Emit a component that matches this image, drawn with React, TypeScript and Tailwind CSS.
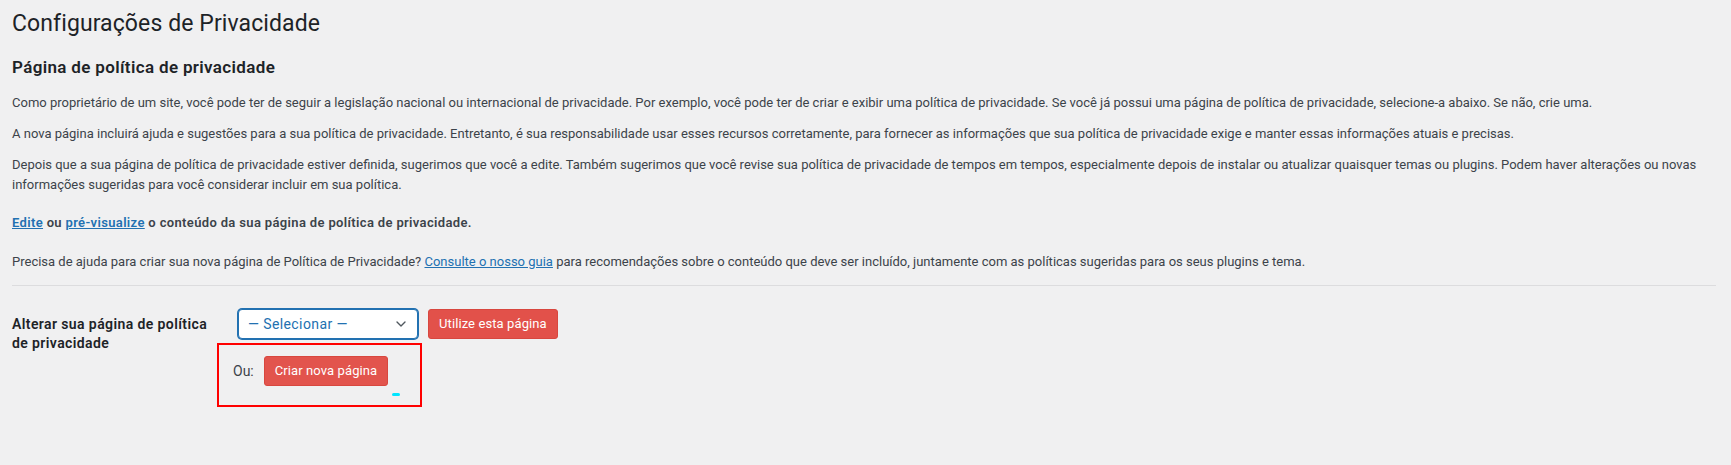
import React from "react";

const PrivacySettings = () => {
  return (
    <div className="min-h-[465px] bg-[#f0f0f1] pl-3 pr-[15px] pt-[9px] font-['Roboto',sans-serif] text-[13px] leading-[20px] text-[#3c434a]">
      <h1 className="text-[23px] leading-[30px] font-normal tracking-[0.1px] text-[#1d2327]">
        Configurações de Privacidade
      </h1>

      {/* Página de política */}
      <h2 className="mt-[17px] text-[17px] leading-[22px] font-semibold tracking-[0.35px] text-[#1d2327]">
        Página de política de privacidade
      </h2>

      <p className="mt-[15px]">
        Como proprietário de um site, você pode ter de seguir a legislação nacional ou internacional de privacidade. Por exemplo, você pode ter de criar e exibir uma política de privacidade. Se você já possui uma página de política de privacidade, selecione-a abaixo. Se não, crie uma.
      </p>
      <p className="mt-[11px]">
        A nova página incluirá ajuda e sugestões para a sua política de privacidade. Entretanto, é sua responsabilidade usar esses recursos corretamente, para fornecer as informações que sua política de privacidade exige e manter essas informações atuais e precisas.
      </p>
      <p className="mt-[11px]">
        <span className="whitespace-nowrap">
          Depois que a sua página de política de privacidade estiver definida, sugerimos que você a edite. Também sugerimos que você revise sua política de privacidade de tempos em tempos, especialmente depois de instalar ou atualizar quaisquer temas ou plugins. Podem haver alterações ou novas
        </span>
        <br />
        informações sugeridas para você considerar incluir em sua política.
      </p>

      <p className="mt-[18px] font-semibold tracking-[0.35px]">
        <a href="#" className="text-[#2271b1] underline">
          Edite
        </a>{" "}
        ou{" "}
        <a href="#" className="text-[#2271b1] underline">
          pré-visualize
        </a>{" "}
        o conteúdo da sua página de política de privacidade.
      </p>

      <p className="mt-[19px]">
        Precisa de ajuda para criar sua nova página de Política de Privacidade?{" "}
        <a href="#" className="text-[#2271b1] underline">
          Consulte o nosso guia
        </a>{" "}
        para recomendações sobre o conteúdo que deve ser incluído, juntamente com as políticas sugeridas para os seus plugins e tema.
      </p>

      <div className="mt-[13px] border-t border-[#dcdcde]" />

      {/* Alterar página */}
      <div className="flex">
        <div className="w-[226px] pr-[24px] pt-[29px] text-[14px] leading-[19px] font-semibold tracking-[0.4px] text-[#1d2327]">
          Alterar sua página de política de privacidade
        </div>
        <div className="pt-[23px]">
          <div className="flex gap-[10px]">
            <div className="relative flex h-[30px] w-[180px] items-center rounded-[4px] border border-[#2271b1] bg-white pl-[9px] text-[14px] tracking-[0.4px] text-[#2271b1] shadow-[0_0_0_1px_#2271b1]">
              — Selecionar —
              <svg
                className="absolute right-[8px] top-1/2 h-[16px] w-[16px] -translate-y-1/2 text-[#50575e]"
                fill="none"
                stroke="currentColor"
                viewBox="0 0 24 24"
              >
                <path strokeLinecap="round" strokeLinejoin="round" strokeWidth={2} d="M6 9l6 6 6-6" />
              </svg>
            </div>
            <button className="h-[30px] rounded-[3px] border border-[#d8473f] bg-[#e2514a] px-[10px] text-[13px] tracking-[0.1px] text-white">
              Utilize esta página
            </button>
          </div>

          <div className="relative ml-[-21px] mt-[4px] flex h-[64px] w-[205px] items-start gap-[10px] border-2 border-[#ff0000] pl-[14px] pt-[11px]">
            <span className="text-[14px] leading-[30px] text-[#3c434a]">Ou:</span>
            <button className="h-[30px] rounded-[3px] border border-[#d8473f] bg-[#e2544d] px-[10px] text-[13px] tracking-[0.1px] text-white">
              Criar nova página
            </button>
            <span className="absolute left-[173px] top-[48px] h-[3px] w-[8px] rounded-full bg-[#00e5ff]" />
          </div>
        </div>
      </div>
    </div>
  );
};

export default function App() {
  return <PrivacySettings />;
}
